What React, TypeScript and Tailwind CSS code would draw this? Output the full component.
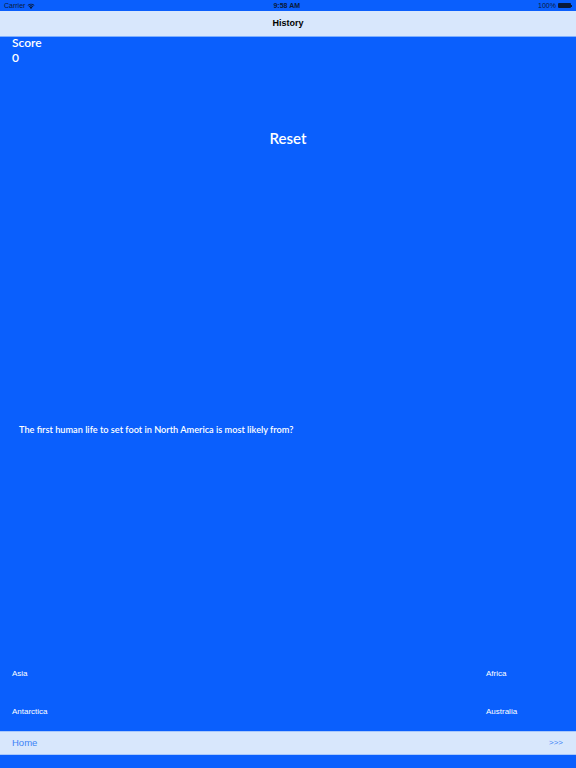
import React from "react";

const ANSWERS = [
  ["Asia", "Africa"],
  ["Antarctica", "Australia"],
];

function StatusBar() {
  return (
    <div className="flex h-[11px] items-center justify-between px-[4px] text-[7px] leading-none text-[#0a1a3a] font-['Liberation_Sans',sans-serif]">
      <div className="flex items-center gap-[2px]">
        <span>Carrier</span>
        <svg width="8" height="6" viewBox="0 0 8 6" fill="#0a1a3a">
          <path d="M4 6 L2.6 4.4 A2 2 0 0 1 5.4 4.4 Z M1.6 3.4 A3.4 3.4 0 0 1 6.4 3.4 L5.8 4 A2.6 2.6 0 0 0 2.2 4 Z M0.5 2.2 A5 5 0 0 1 7.5 2.2 L6.9 2.8 A4.2 4.2 0 0 0 1.1 2.8 Z" />
        </svg>
      </div>
      <span className="font-semibold">9:58 AM</span>
      <div className="flex items-center gap-[2px]">
        <span>100%</span>
        <div className="flex items-center">
          <div className="h-[5px] w-[13px] rounded-[1px] bg-[#0a1a3a]" />
          <div className="h-[2px] w-[1px] bg-[#0a1a3a]" />
        </div>
      </div>
    </div>
  );
}

export default function App() {
  return (
    <div className="flex h-[768px] w-[576px] flex-col bg-[#0a5ffd] text-white">
      <StatusBar />
      <div className="flex h-[26px] items-center justify-center border-b border-[#7fb0ff] bg-[#d8e7fc] text-[9px] font-semibold text-black font-['Liberation_Sans',sans-serif]">
        History
      </div>

      <div className="flex flex-1 flex-col font-['Lato',sans-serif]">
        <div className="-mt-[2px] px-[12px] text-[12px] font-semibold leading-[15px]">
          <div>Score</div>
          <div>0</div>
        </div>

        <div className="mt-[66px] text-center text-[15px] font-semibold leading-none">Reset</div>

        <div className="mt-[279px] px-[19px] text-[9.2px] font-semibold leading-none">
          The first human life to set foot in North America is most likely from?
        </div>

        <div className="mt-auto flex flex-col gap-[29px] pb-[15px] font-['Liberation_Sans',sans-serif] text-[8px] leading-[9px]">
          {ANSWERS.map((row) => (
            <div key={row[0]} className="flex justify-between px-[12px]">
              <span>{row[0]}</span>
              <span className="w-[78px]">{row[1]}</span>
            </div>
          ))}
        </div>
      </div>

      <div className="mb-[13px] flex h-[24px] items-center justify-between border-y border-[#a9c8fb] bg-[#d8e7fc] px-[12px] text-[9.5px] text-[#3b82f6] font-['Liberation_Sans',sans-serif]">
        <span>Home</span>
        <span className="pr-[1px] text-[8px]">&gt;&gt;&gt;</span>
      </div>
    </div>
  );
}
